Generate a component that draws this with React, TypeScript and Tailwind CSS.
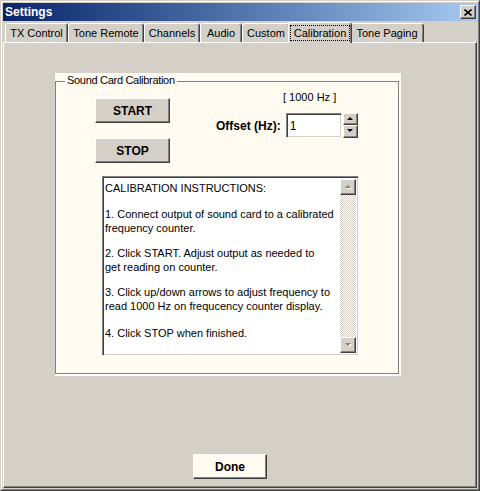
import React from "react";

const tabs = [
  { label: "TX Control", w: "w-[63px]" },
  { label: "Tone Remote", w: "w-[76px]" },
  { label: "Channels", w: "w-[56px]" },
  { label: "Audio", w: "w-[42px]" },
  { label: "Custom", w: "w-[48px]" },
  { label: "Calibration", w: "w-[64px]", active: true },
  { label: "Tone Paging", w: "w-[74px]" },
];

const raised =
  "border border-t-white border-l-white border-r-[#404040] border-b-[#404040] shadow-[inset_-1px_-1px_0_#808080]";
const sunken =
  "border border-t-[#808080] border-l-[#808080] border-r-white border-b-white shadow-[inset_1px_1px_0_#404040,inset_-1px_-1px_0_#d4d0c8]";

function Arrow({ up, disabled }: { up?: boolean; disabled?: boolean }) {
  const pts = up ? "0,3 3,0 6,3" : "0,0 3,3 6,0";
  return (
    <svg width="7" height="5" viewBox="0 0 7 5">
      {disabled && <polygon points={pts} fill="#fff" transform="translate(1 1)" />}
      <polygon points={pts} fill={disabled ? "#808080" : "#000"} />
    </svg>
  );
}

function Tab({ label, w, active }: { label: string; w: string; active?: boolean }) {
  if (active) {
    return (
      <div
        className={`${w} -mx-[2px] h-[21px] -mb-px relative z-10 bg-[#d4d0c8] rounded-t-[3px] border-t border-l border-r border-t-white border-l-white border-r-[#404040] shadow-[inset_-1px_0_0_#808080] flex items-start justify-center pt-[2px]`}
      >
        <span className="border border-dotted border-black h-[16px] px-[3px] leading-[14px]">
          {label}
        </span>
      </div>
    );
  }
  return (
    <div
      className={`${w} h-[19px] rounded-t-[3px] border-t border-l border-r border-t-white border-l-white border-r-[#404040] shadow-[inset_-1px_0_0_#808080] flex items-center justify-center`}
    >
      {label}
    </div>
  );
}

export default function App() {
  return (
    <div
      className="w-[480px] h-[491px] bg-[#d4d0c8] border border-t-[#d4d0c8] border-l-[#d4d0c8] border-r-[#404040] border-b-[#404040] text-[11px] text-black"
      style={{ fontFamily: '"Liberation Sans", Arial, sans-serif' }}
    >
      <div className="h-full flex flex-col border border-t-white border-l-white border-r-[#808080] border-b-[#808080] p-px">
        {/* title bar */}
        <div className="h-[18px] shrink-0 flex items-center justify-between bg-linear-to-r from-[#0a246a] to-[#a6caf0] pl-[2px] pr-[1px]">
          <span className="text-white font-bold text-[12px]">Settings</span>
          <button className={`w-[16px] h-[14px] bg-[#d4d0c8] ${raised} flex items-center justify-center`}>
            <svg width="8" height="7" viewBox="0 0 8 7">
              <path d="M0.5 0.5 L7.5 6.5 M7.5 0.5 L0.5 6.5" stroke="#000" strokeWidth="1.6" />
            </svg>
          </button>
        </div>

        {/* tab strip */}
        <div className="h-[21px] shrink-0 flex items-end pl-[2px]">
          {tabs.map((t) => (
            <Tab key={t.label} {...t} />
          ))}
        </div>

        {/* tab page */}
        <div className="flex-1 border border-t-white border-l-white border-r-[#404040] border-b-[#404040] shadow-[inset_-1px_-1px_0_#808080] flex flex-col items-start">
          <div className="ml-[51px] mt-[30px] w-[346px] h-[303px] bg-[#fffbf0] relative">
            <span className="absolute left-[10px] top-0 px-[2px] leading-[14px] bg-[#fffbf0] tracking-[-0.3px]">
              Sound Card Calibration
            </span>
            <div className="mt-[8px] w-[344px] h-[293px] border border-[#808080] shadow-[inset_1px_1px_0_#fff,1px_1px_0_#fff] pt-[9px]">
              <div className="flex items-start">
                <div className="ml-[39px] mt-[7px] flex flex-col gap-[15px]">
                  <button className={`w-[75px] h-[25px] bg-[#d4d0c8] ${raised} font-bold text-[12px]`}>
                    START
                  </button>
                  <button className={`w-[75px] h-[25px] bg-[#d4d0c8] ${raised} font-bold text-[12px]`}>
                    STOP
                  </button>
                </div>
                <div className="ml-[46px] flex flex-col">
                  <div className="ml-[67px] h-[13px] leading-[13px]">[ 1000 Hz ]</div>
                  <div className="mt-[9px] flex items-center">
                    <span className="font-bold text-[12px] mr-[5px]">Offset (Hz):</span>
                    <div className={`w-[56px] h-[25px] bg-white ${sunken} flex items-center pl-[3px] text-[12px]`}>
                      1
                    </div>
                    <div className="ml-px flex flex-col h-[25px]">
                      <div className={`w-[15px] h-[12px] bg-[#d4d0c8] ${raised} flex items-center justify-center`}>
                        <Arrow up />
                      </div>
                      <div className={`w-[15px] h-[13px] bg-[#d4d0c8] ${raised} flex items-center justify-center`}>
                        <Arrow />
                      </div>
                    </div>
                  </div>
                </div>
              </div>

              <div className={`ml-[46px] mt-[13px] w-[257px] h-[180px] bg-white ${sunken} flex`}>
                <div className="flex-1 pl-[2px] pt-[4px] leading-[14.5px]">
                  <p className="mb-[11px]">CALIBRATION INSTRUCTIONS:</p>
                  <p className="mb-[10px]">
                    1. Connect output of sound card to a calibrated
                    <br />
                    frequency counter.
                  </p>
                  <p className="mb-[10px]">
                    2. Click START. Adjust output as needed to
                    <br />
                    get reading on counter.
                  </p>
                  <p className="mb-[12px]">
                    3. Click up/down arrows to adjust frequency to
                    <br />
                    read 1000 Hz on frequcency counter display.
                  </p>
                  <p>4. Click STOP when finished.</p>
                </div>
                <div className="w-[16px] my-[2px] mr-[2px] flex flex-col bg-[repeating-conic-gradient(#d4d0c8_0_25%,#fff_0_50%)] bg-[length:2px_2px]">
                  <div className={`w-[16px] h-[16px] bg-[#d4d0c8] ${raised} flex items-center justify-center`}>
                    <Arrow up disabled />
                  </div>
                  <div className="flex-1" />
                  <div className={`w-[16px] h-[16px] bg-[#d4d0c8] ${raised} flex items-center justify-center`}>
                    <Arrow disabled />
                  </div>
                </div>
              </div>
            </div>
          </div>

          <button className={`ml-[189px] mt-[78px] w-[74px] h-[25px] bg-[#fffbf0] ${raised} font-bold text-[12px]`}>
            Done
          </button>
        </div>
      </div>
    </div>
  );
}
